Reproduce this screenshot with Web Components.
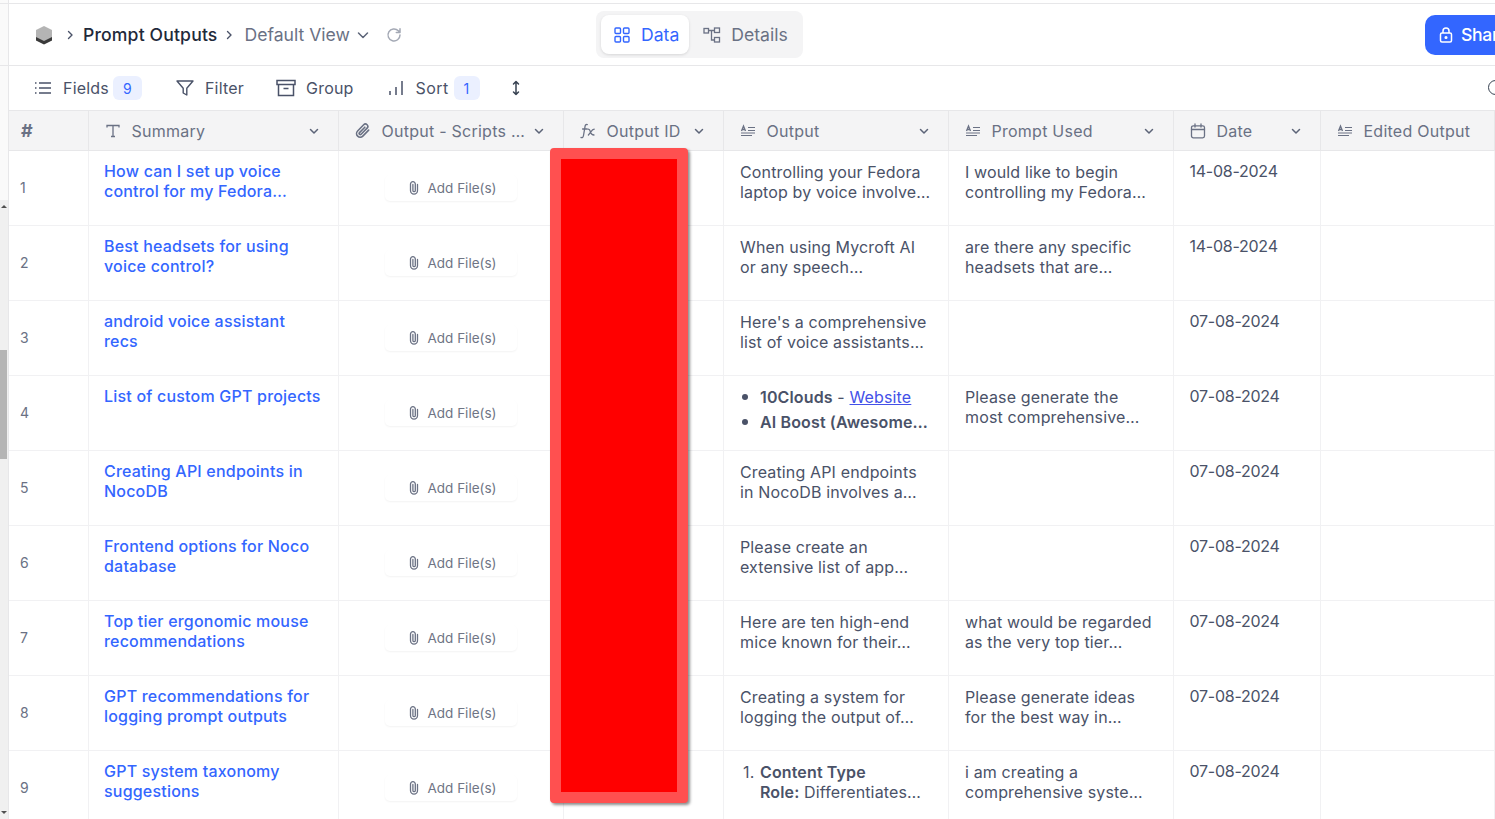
<!DOCTYPE html>
<html>
<head>
<meta charset="utf-8">
<title>Prompt Outputs</title>
<style>
html, body { margin: 0; height: 100%; overflow: hidden; background: #fff; }
body { font-family: Inter, "Liberation Sans", sans-serif; color: #4a5268; }
a { color: #4351e8; }
b { font-weight: 600; }
.bullet { display: flex; align-items: center; gap: 12px; margin-left: 2px; height: 20px; }
.bullet + .bullet { margin-top: 5px; }
.bullet i { width: 6px; height: 6px; border-radius: 50%; background: #4a5268; flex: none; }
</style>
</head>
<body>
<app-shell>
  <top-bar></top-bar>
  <tool-bar></tool-bar>
  <data-grid></data-grid>
</app-shell>

<script>
const icons = {
  text: '<svg width="16" height="16" viewBox="0 0 16 16" fill="none" stroke="#6a7184" stroke-width="1.3"><path d="M2 4.500V2.500h12v2M8 2.500v11M6 13.500h4"/></svg>',
  clip: '<svg width="17" height="17" viewBox="0 0 16 16" style="margin-left:-1px" fill="none" stroke="#6a7184" stroke-width="1.500" stroke-linecap="round"><path d="M13.800 7.600l-5.500 5.700a3.400 3.400 0 0 1-4.900-4.800l5.700-5.900a2.200 2.200 0 0 1 3.200 3.200l-5.600 5.700a1 1 0 0 1-1.500-1.500l5-5.100"/></svg>',
  fx: '<svg width="16" height="16" viewBox="0 0 16 16" fill="none" stroke="#6a7184" stroke-width="1.300" stroke-linecap="round"><path d="M1 14.500c1.600.4 2.200-.4 2.500-2L5 3.600C5.300 2 6 1.200 7.300 1.600M2.600 6h4.600M8.400 6.200c1.400 0 1.500 1 2 2.600s.9 3.200 3.600 3.200M14.200 6.200c-2.200 0-3.300 3-5.800 5.800"/></svg>',
  longtext: '<svg width="16" height="16" viewBox="0 0 16 16" fill="none" stroke="#6a7184" stroke-width="1.200"><path d="M8 4.500h7M8 7.500h7M1 10h14M1 12.500h11"/><path d="M1.500 8l2-5 2 5M2.300 6.500h2.400" stroke-width="1.300"/></svg>',
  date: '<svg width="16" height="16" viewBox="0 0 16 16" fill="none" stroke="#6a7184" stroke-width="1.300" stroke-linecap="round"><rect x="1.500" y="2.800" width="13" height="12" rx="1.800"/><path d="M1.500 6.500h13M5 1v3M11 1v3"/></svg>',
  chev: '<svg width="10" height="10" viewBox="0 0 10 10" fill="none" stroke="#5c6478" stroke-width="1.500" stroke-linecap="round" stroke-linejoin="round"><path d="M1.500 3.500L5 7l3.500-3.500"/></svg>'
};

const crumbChevron = '<svg width="10" height="12" viewBox="0 0 10 12" fill="none" stroke="#4a5268" stroke-width="1.400" stroke-linecap="round" stroke-linejoin="round"><path d="M3.500 2.500L7 6l-3.500 3.500"/></svg>';

class AppShell extends HTMLElement {
  constructor() {
    super();
    this.attachShadow({ mode: 'open' }).innerHTML = `
      <style>
        :host { display: flex; height: 100vh; overflow: hidden; }
        .gutter { width: 8px; flex: none; background: #fafafa; border-right: 1px solid #e7e7e9; display: flex; flex-direction: column; }
        .pad { height: 200px; flex: none; background: linear-gradient(#e7e7e9, #e7e7e9) 0 3px / 100% 1px no-repeat, linear-gradient(#e7e7e9, #e7e7e9) 0 65px / 100% 1px no-repeat; }
        .track { flex: 1; background: #f0f0f0; padding-top: 150px; position: relative; }
        .thumb { width: 7px; height: 109px; background: #b5b5b5; }
        .arrow { position: absolute; left: 1px; width: 0; height: 0; border-left: 3px solid transparent; border-right: 3px solid transparent; }
        .up { top: 5px; border-bottom: 3px solid #505050; }
        .down { bottom: 5px; border-top: 3px solid #505050; }
        .main { flex: 1; min-width: 0; display: flex; flex-direction: column; border-top: 1px solid #e7e7e9; margin-top: 3px; overflow: hidden; position: relative; }
      </style>
      <div class="gutter"><div class="pad"></div><div class="track"><span class="arrow up"></span><div class="thumb"></div><span class="arrow down"></span></div></div>
      <div class="main"><slot></slot></div>`;
  }
}

class TopBar extends HTMLElement {
  constructor() {
    super();
    this.attachShadow({ mode: 'open' }).innerHTML = `
      <style>
        :host { display: grid; grid-template-columns: 561px auto 1fr; align-items: center; height: 61px; flex: none; border-bottom: 1px solid #e7e7e9; padding-left: 26px; font-size: 17.6px; white-space: nowrap; }
        .crumbs { display: flex; align-items: center; }
        .sep { margin: 0 9px 0 12px; display: flex; }
        .sep.second { margin: 0 11px 0 6px; }
        .title { color: #1f293a; font-weight: 500; letter-spacing: .15px; margin-left: -1px; }
        .view { color: #6a7184; }
        .tabs { display: flex; background: #f4f4f5; border-radius: 8px; padding: 4px 5px; height: 47px; box-sizing: border-box; }
        .tab { display: flex; align-items: center; gap: 10px; padding: 0 10px 0 13px; color: #6a7184; border-radius: 8px; }
        .tab.on { background: #fff; color: #3366ff; box-shadow: 0 1px 3px rgba(0,0,0,.12); gap: 11px; }
        .tab + .tab { padding-left: 14px; }
        .right { display: flex; justify-content: flex-end; overflow: hidden; }
        .share { margin-right: -50px; width: 120px; height: 40px; background: #3366ff; color: #fff; border-radius: 10px 0 0 10px; display: flex; align-items: center; gap: 8px; padding-left: 14px; box-sizing: border-box; font-weight: 500; letter-spacing: -.3px; flex: none; }
        .reload { margin-left: 17px; display: flex; }
        .chev { margin-left: 7px; display: flex; }
      </style>
      <div class="crumbs">
        <svg width="18" height="20" viewBox="0 0 18 20"><path d="M9 1l8 4v10l-8 4-8-4V5z" fill="#b4b4b4"/><path d="M1 12l8 4 8-4v3.500l-8 4-8-4z" fill="#3a3a3a"/></svg>
        <span class="sep">${crumbChevron}</span>
        <span class="title">Prompt Outputs</span>
        <span class="sep second">${crumbChevron}</span>
        <span class="view">Default View</span>
        <span class="chev"><svg width="12" height="12" viewBox="0 0 12 12" fill="none" stroke="#5c6478" stroke-width="1.500" stroke-linecap="round" stroke-linejoin="round"><path d="M1.500 4L6 8.500 10.500 4"/></svg></span>
        <span class="reload"><svg width="16" height="16" viewBox="0 0 16 16" fill="none" stroke="#a4a9b5" stroke-width="1.500" stroke-linecap="round" stroke-linejoin="round"><path d="M14 8a6 6 0 1 1-1.700-4.200L14 5.500M14 1.800v3.700h-3.700"/></svg></span>
      </div>
      <div class="tabs">
        <div class="tab on"><svg width="16" height="16" viewBox="0 0 16 16" fill="none" stroke="#3366ff" stroke-width="1.400"><rect x="1" y="1" width="5.500" height="5.500" rx="1"/><rect x="9.500" y="1" width="5.500" height="5.500" rx="1"/><rect x="1" y="9.500" width="5.500" height="5.500" rx="1"/><rect x="9.500" y="9.500" width="5.500" height="5.500" rx="1"/></svg>Data</div>
        <div class="tab"><svg width="18" height="16" viewBox="0 0 18 16" fill="none" stroke="#6a7184" stroke-width="1.300"><rect x="1" y="1.500" width="4.500" height="4.500"/><rect x="11.500" y="1" width="5" height="4.500"/><rect x="11.500" y="10.500" width="5" height="4.500"/><path d="M5.500 3.500h6M8.500 3.500v9.500h3"/></svg>Details</div>
      </div>
      <div class="right"><div class="share"><svg width="14" height="16" viewBox="0 0 14 16" fill="none" stroke="#fff" stroke-width="1.500"><rect x="1.500" y="6" width="11" height="9" rx="1.500"/><path d="M4 6V4a3 3 0 0 1 6 0v2"/><circle cx="7" cy="10.500" r=".8" fill="#fff"/></svg>Share</div></div>`;
  }
}

class ToolBar extends HTMLElement {
  constructor() {
    super();
    this.attachShadow({ mode: 'open' }).innerHTML = `
      <style>
        :host { display: flex; align-items: center; height: 44px; flex: none; border-bottom: 1px solid #e7e7e9; padding-left: 25px; font-size: 16px; letter-spacing: .2px; color: #4a5268; position: relative; }
        .item { display: flex; align-items: center; gap: 11px; }
        .badge { background: #ebf0ff; color: #3366ff; font-size: 14px; border-radius: 6px; width: 29px; height: 24px; display: flex; align-items: center; justify-content: center; margin-left: -7px; }
        .badge.small { width: 26px; margin-left: -7px; }
        .sort { gap: 12px; letter-spacing: .4px; }
        .search { position: absolute; right: -8px; top: 14px; width: 15px; height: 15px; box-sizing: border-box; border: 1.500px solid #374151; border-radius: 50%; }
      </style>
      <div class="item" style="margin-right:34px"><svg width="18" height="14" viewBox="0 0 18 14" fill="none" stroke="#4a5268" stroke-width="1.400"><path d="M5 2h12M5 7h12M5 12h12"/><path d="M1 2h1.500M1 7h1.500M1 12h1.500"/></svg>Fields<span class="badge">9</span></div>
      <div class="item" style="margin-right:32px"><svg width="18" height="18" viewBox="0 0 18 18" fill="none" stroke="#4a5268" stroke-width="1.400" stroke-linejoin="round"><path d="M1 2h16l-6.200 7.200V16l-3.600-2V9.200z"/></svg>Filter</div>
      <div class="item" style="margin-right:34px;gap:10px"><svg width="20" height="18" viewBox="0 0 20 18" fill="none" stroke="#4a5268" stroke-width="1.500"><rect x="1" y="1.500" width="18" height="4"/><path d="M2.500 5.500V16.500h15V5.500M7.500 9.500h5"/></svg>Group</div>
      <div class="item sort" style="margin-right:31px"><svg width="16" height="16" viewBox="0 0 16 16" fill="none" stroke="#4a5268" stroke-width="1.500"><path d="M2 11v4M8 7v8M14 1v14"/></svg>Sort<span class="badge small">1</span></div>
      <svg width="10" height="16" viewBox="0 0 10 16" fill="none" stroke="#374151" stroke-width="1.500" stroke-linecap="round" stroke-linejoin="round"><path d="M5 1.500v13M2.500 4L5 1.500 7.500 4M2.500 12L5 14.500 7.500 12"/></svg>
      <span class="search"></span>`;
  }
}

class HeadCell extends HTMLElement {
  constructor() {
    super();
    this.attachShadow({ mode: 'open' }).innerHTML = `
      <style>
        :host { display: flex; align-items: center; box-sizing: border-box; padding: 0 19px 0 16px; border-right: 1px solid #e7e7e9; font-size: 16px; letter-spacing: .25px; color: #6a7184; white-space: nowrap; overflow: hidden; min-width: 0; }
        :host([hash]) { padding: 0 0 0 12px; font-size: 18px; font-weight: 700; }
        .ic { display: flex; margin-right: 10.500px; flex: none; }
        .ic:empty, .chev:empty { display: none; }
        .label { flex: 1; min-width: 0; }
        .chev { display: flex; flex: none; margin-left: 8px; }
      </style>
      <span class="ic"></span><span class="label"><slot></slot></span><span class="chev"></span>`;
  }
  connectedCallback() {
    this.shadowRoot.querySelector('.ic').innerHTML = icons[this.getAttribute('icon')] || '';
    if (!this.hasAttribute('nochev')) this.shadowRoot.querySelector('.chev').innerHTML = icons.chev;
  }
}

class GridCell extends HTMLElement {
  constructor() {
    super();
    this.attachShadow({ mode: 'open' }).innerHTML = `
      <style>
        :host { display: block; box-sizing: border-box; padding: 11px 16px 0; border-right: 1px solid #f1f1f3; font-size: 16px; line-height: 20px; letter-spacing: .14px; color: #4a5268; min-width: 0; overflow: hidden; }
        :host([link]) { color: #3366ff; font-weight: 500; padding-top: 10px; padding-left: 15px; letter-spacing: .2px; padding-right: 12px; }
        :host([date]) { padding-top: 10px; padding-left: 15.500px; letter-spacing: -.25px; }
        :host([num]) { display: flex; align-items: center; padding: 0 11px; font-size: 14px; color: #6a7184; }
        :host([center]) { display: flex; align-items: center; justify-content: center; padding: 0; }
      </style>
      <slot></slot>`;
  }
}

class AddFile extends HTMLElement {
  constructor() {
    super();
    this.attachShadow({ mode: 'open' }).innerHTML = `
      <style>
        :host { display: flex; align-items: center; justify-content: center; gap: 9px; width: 132px; height: 26px; box-sizing: border-box; padding-left: 3px; border-radius: 5px; font-size: 13.500px; letter-spacing: 0; color: #6f7585; box-shadow: 0 1px 2px rgba(0,0,0,.05); white-space: nowrap; }
      </style>
      <svg width="10" height="14" viewBox="0 0 10 14" fill="none" stroke="#6a7184" stroke-width="1.300" stroke-linecap="round"><path d="M8.500 3.500v6a3.500 3.700 0 0 1-7 0V3a2.400 2.300 0 0 1 4.800 0v6.500a1.200 1.200 0 0 1-2.400 0V3.500"/></svg>Add File(s)`;
  }
}

class GridRow extends HTMLElement {
  constructor() {
    super();
    this.attachShadow({ mode: 'open' }).innerHTML = `
      <style>
        :host { display: grid; grid-template-columns: 80px 250px 225px 160px 225px 225px 147px 1fr; height: 75px; border-bottom: 1px solid #f1f1f3; box-sizing: border-box; flex: none; }
        :host([head]) { height: 40px; background: #f4f4f5; border-bottom: 1px solid #e7e7e9; }
      </style>
      <slot></slot>`;
  }
}

class RedactBox extends HTMLElement {
  constructor() {
    super();
    this.attachShadow({ mode: 'open' }).innerHTML = `
      <style>
        :host { position: absolute; left: 541px; top: 144px; width: 138px; height: 655px; box-sizing: border-box; background: #f00; border: 11px solid #ff5050; border-radius: 4px; box-shadow: 2px 2px 3px rgba(0,0,0,.45); background-clip: padding-box; }
      </style>`;
  }
}

class DataGrid extends HTMLElement {
  constructor() {
    super();
    this.attachShadow({ mode: 'open' }).innerHTML = `
      <style>
        :host { display: flex; flex-direction: column; flex: 1; min-height: 0; overflow: hidden; }
      </style>
      <slot></slot>`;
  }
  connectedCallback() {
    const rows = [
      ['How can I set up voice control for my Fedora…', 'Controlling your Fedora laptop by voice involve…', 'I would like to begin controlling my Fedora…', '14-08-2024'],
      ['Best headsets for using voice control?', 'When using Mycroft AI or any speech…', 'are there any specific headsets that are…', '14-08-2024'],
      ['android voice assistant<br>recs', 'Here\'s a comprehensive list of voice assistants…', '', '07-08-2024'],
      ['List of custom GPT projects', '<div class="bullet"><i></i><span><b>10Clouds</b> - <a href="#">Website</a></span></div><div class="bullet"><i></i><b>AI Boost (Awesome…</b></div>', 'Please generate the most comprehensive…', '07-08-2024'],
      ['Creating API endpoints in NocoDB', 'Creating API endpoints<br>in NocoDB involves a…', '', '07-08-2024'],
      ['Frontend options for Noco database', 'Please create an extensive list of app…', '', '07-08-2024'],
      ['Top tier ergonomic mouse recommendations', 'Here are ten high-end mice known for their…', 'what would be regarded as the very top tier…', '07-08-2024'],
      ['GPT recommendations for logging prompt outputs', 'Creating a system for logging the output of…', 'Please generate ideas for the best way in…', '07-08-2024'],
      ['GPT system taxonomy suggestions', '<div style="display:flex"><span style="width:20px;padding-left:3px;box-sizing:border-box">1.</span><span><b>Content Type<br>Role:</b> Differentiates…</span></div>', 'i am creating a comprehensive syste…', '07-08-2024']
    ];
    const head = `<grid-row head>
      <head-cell hash nochev>#</head-cell>
      <head-cell icon="text">Summary</head-cell>
      <head-cell icon="clip">Output - Scripts …</head-cell>
      <head-cell icon="fx">Output ID</head-cell>
      <head-cell icon="longtext">Output</head-cell>
      <head-cell icon="longtext">Prompt Used</head-cell>
      <head-cell icon="date">Date</head-cell>
      <head-cell icon="longtext" nochev>Edited Output</head-cell>
    </grid-row>`;
    const body = rows.map((r, i) => `<grid-row>
      <grid-cell num>${i + 1}</grid-cell>
      <grid-cell link>${r[0]}</grid-cell>
      <grid-cell center><add-file></add-file></grid-cell>
      <grid-cell></grid-cell>
      <grid-cell>${r[1]}</grid-cell>
      <grid-cell>${r[2]}</grid-cell>
      <grid-cell date>${r[3]}</grid-cell>
      <grid-cell></grid-cell>
    </grid-row>`).join('');
    this.innerHTML = head + body + '<redact-box></redact-box>';
  }
}

customElements.define('app-shell', AppShell);
customElements.define('top-bar', TopBar);
customElements.define('tool-bar', ToolBar);
customElements.define('head-cell', HeadCell);
customElements.define('grid-cell', GridCell);
customElements.define('add-file', AddFile);
customElements.define('grid-row', GridRow);
customElements.define('redact-box', RedactBox);
customElements.define('data-grid', DataGrid);
</script>
</body>
</html>
